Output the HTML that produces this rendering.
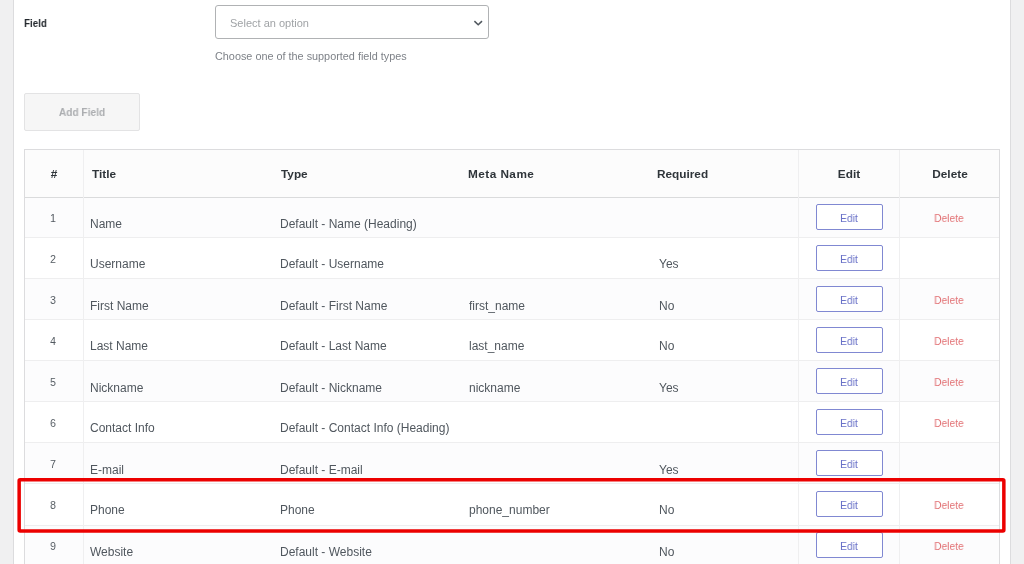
<!DOCTYPE html>
<html><head><meta charset="utf-8"><style>
*{margin:0;padding:0;box-sizing:border-box}
html,body{width:1024px;height:564px;overflow:hidden;background:#f0f0f1;font-family:"Liberation Sans",sans-serif}
.a{position:absolute;white-space:nowrap;line-height:1;will-change:transform;transform-origin:0 0}
.c{transform-origin:50% 0 !important}
.c{text-align:center;width:200px}
#panel{position:absolute;left:13px;top:-1px;width:998px;height:600px;background:#fff;border-left:1px solid #dcdcde;border-right:1px solid #dcdcde}
#sel{position:absolute;left:215px;top:5px;width:274px;height:34px;border:1px solid #b0b2b4;border-radius:3px;background:#fff}
#btn{position:absolute;left:24px;top:93px;width:116px;height:38px;background:#f6f6f6;border:1px solid #e3e3e4;border-radius:2px}
#tbl{position:absolute;left:24px;top:149px;width:976px;height:500px;border:1px solid #dcdcde;background:#fff}
.hd{position:absolute;left:25px;top:150px;width:974px;height:48px;background:#fcfcfc;border-bottom:1px solid #dadbdc}
.vl{position:absolute;top:150px;width:1px;height:420px;background:#efeff0}
.row{position:absolute;left:25px;width:974px;height:41px;border-bottom:1px solid #eeeeef}
.odd{background:#fcfcfd}
.eb{position:absolute;left:816px;width:67px;height:26px;border:1px solid #8088d2;border-radius:2px;background:#fff}
#red{position:absolute;left:17.5px;top:478px;width:988px;height:55px;border:4px solid #e30b0b}
.lbl{font-size:11.1px;font-weight:700;color:#23282d;letter-spacing:0px;transform:scaleX(0.89);}
.ph{font-size:11px;font-weight:400;color:#a0a3a6;letter-spacing:0px;}
.help{font-size:10.85px;font-weight:400;color:#7e8288;letter-spacing:0px;}
.btxt{font-size:11.1px;font-weight:700;color:#acaeb1;letter-spacing:0px;transform:scaleX(0.915);}
.th{font-size:11.8px;font-weight:700;color:#2f353a;letter-spacing:0px;}
.num{font-size:10.8px;font-weight:400;color:#50575e;letter-spacing:0px;transform:scaleX(0.95);}
.td{font-size:12px;font-weight:400;color:#50575e;letter-spacing:0px;}
.et{font-size:11.5px;font-weight:400;color:#6a72c8;letter-spacing:0px;transform:scaleX(0.885);}
.dt{font-size:11.4px;font-weight:400;color:#e27174;letter-spacing:0px;transform:scaleX(0.9);}
</style></head><body>
<div id="panel"></div>
<div class="a lbl" style="left:24.2px;top:18px;">Field</div>
<div id="sel"></div>
<div class="a ph" style="left:229.8px;top:18px;">Select an option</div>
<svg class="a" style="left:472px;top:19px" width="12" height="8" viewBox="0 0 12 8"><path d="M2.4 2.1 L6.2 5.8 L10 2.1" fill="none" stroke="#50575e" stroke-width="1.5"/></svg>
<div class="a help" style="left:214.6px;top:51px;">Choose one of the supported field types</div>
<div id="btn"></div>
<div class="a c btxt" style="left:-18.0px;top:107px;">Add Field</div>
<div id="tbl"></div>
<div class="hd"></div>
<div class="row odd" style="top:198px;height:40px"></div>
<div class="row" style="top:238px;height:41px"></div>
<div class="row odd" style="top:279px;height:41px"></div>
<div class="row" style="top:320px;height:41px"></div>
<div class="row odd" style="top:361px;height:41px"></div>
<div class="row" style="top:402px;height:41px"></div>
<div class="row odd" style="top:443px;height:41px"></div>
<div class="row" style="top:484px;height:42px"></div>
<div class="row odd" style="top:526px;height:41px"></div>
<div class="vl" style="left:83px"></div>
<div class="vl" style="left:798px"></div>
<div class="vl" style="left:899px"></div>
<div class="a c th" style="left:-46.4px;top:169px;">#</div>
<div class="a th" style="left:92.2px;top:169px;">Title</div>
<div class="a th" style="left:281.3px;top:169px;">Type</div>
<div class="a th" style="left:468.3px;top:169px;letter-spacing:0.45px">Meta Name</div>
<div class="a th" style="left:657.2px;top:169px;">Required</div>
<div class="a c th" style="left:748.5px;top:169px;">Edit</div>
<div class="a c th" style="left:849.5px;top:169px;">Delete</div>
<div class="a c num" style="left:-46.8px;top:213px;">1</div>
<div class="a td" style="left:89.7px;top:218px;">Name</div>
<div class="a td" style="left:279.7px;top:218px;">Default - Name (Heading)</div>
<div class="eb" style="top:204px"></div>
<div class="a c et" style="left:749.2px;top:213px;">Edit</div>
<div class="a c dt" style="left:849.0px;top:213px;">Delete</div>
<div class="a c num" style="left:-46.8px;top:254px;">2</div>
<div class="a td" style="left:89.7px;top:258px;">Username</div>
<div class="a td" style="left:279.7px;top:258px;">Default - Username</div>
<div class="a td" style="left:658.5px;top:258px;">Yes</div>
<div class="eb" style="top:245px"></div>
<div class="a c et" style="left:749.2px;top:254px;">Edit</div>
<div class="a c num" style="left:-46.8px;top:295px;">3</div>
<div class="a td" style="left:89.7px;top:300px;">First Name</div>
<div class="a td" style="left:279.7px;top:300px;">Default - First Name</div>
<div class="a td" style="left:468.7px;top:300px;">first_name</div>
<div class="a td" style="left:658.5px;top:300px;">No</div>
<div class="eb" style="top:286px"></div>
<div class="a c et" style="left:749.2px;top:295px;">Edit</div>
<div class="a c dt" style="left:849.0px;top:295px;">Delete</div>
<div class="a c num" style="left:-46.8px;top:336px;">4</div>
<div class="a td" style="left:89.7px;top:340px;">Last Name</div>
<div class="a td" style="left:279.7px;top:340px;">Default - Last Name</div>
<div class="a td" style="left:468.7px;top:340px;">last_name</div>
<div class="a td" style="left:658.5px;top:340px;">No</div>
<div class="eb" style="top:327px"></div>
<div class="a c et" style="left:749.2px;top:336px;">Edit</div>
<div class="a c dt" style="left:849.0px;top:336px;">Delete</div>
<div class="a c num" style="left:-46.8px;top:377px;">5</div>
<div class="a td" style="left:89.7px;top:382px;">Nickname</div>
<div class="a td" style="left:279.7px;top:382px;">Default - Nickname</div>
<div class="a td" style="left:468.7px;top:382px;">nickname</div>
<div class="a td" style="left:658.5px;top:382px;">Yes</div>
<div class="eb" style="top:368px"></div>
<div class="a c et" style="left:749.2px;top:377px;">Edit</div>
<div class="a c dt" style="left:849.0px;top:377px;">Delete</div>
<div class="a c num" style="left:-46.8px;top:418px;">6</div>
<div class="a td" style="left:89.7px;top:422px;">Contact Info</div>
<div class="a td" style="left:279.7px;top:422px;">Default - Contact Info (Heading)</div>
<div class="eb" style="top:409px"></div>
<div class="a c et" style="left:749.2px;top:418px;">Edit</div>
<div class="a c dt" style="left:849.0px;top:418px;">Delete</div>
<div class="a c num" style="left:-46.8px;top:459px;">7</div>
<div class="a td" style="left:89.7px;top:464px;">E-mail</div>
<div class="a td" style="left:279.7px;top:464px;">Default - E-mail</div>
<div class="a td" style="left:658.5px;top:464px;">Yes</div>
<div class="eb" style="top:450px"></div>
<div class="a c et" style="left:749.2px;top:459px;">Edit</div>
<div class="a c num" style="left:-46.8px;top:500px;">8</div>
<div class="a td" style="left:89.7px;top:504px;">Phone</div>
<div class="a td" style="left:279.7px;top:504px;">Phone</div>
<div class="a td" style="left:468.7px;top:504px;">phone_number</div>
<div class="a td" style="left:658.5px;top:504px;">No</div>
<div class="eb" style="top:491px"></div>
<div class="a c et" style="left:749.2px;top:500px;">Edit</div>
<div class="a c dt" style="left:849.0px;top:500px;">Delete</div>
<div class="a c num" style="left:-46.8px;top:541px;">9</div>
<div class="a td" style="left:89.7px;top:546px;">Website</div>
<div class="a td" style="left:279.7px;top:546px;">Default - Website</div>
<div class="a td" style="left:658.5px;top:546px;">No</div>
<div class="eb" style="top:532px"></div>
<div class="a c et" style="left:749.2px;top:541px;">Edit</div>
<div class="a c dt" style="left:849.0px;top:541px;">Delete</div>
<svg class="a" style="left:0;top:0;will-change:auto" width="1024" height="564"><rect x="19.15" y="479.65" width="984.7" height="51.4" rx="1" fill="none" stroke="#ec0000" stroke-width="3.5"/></svg>
</body></html>
